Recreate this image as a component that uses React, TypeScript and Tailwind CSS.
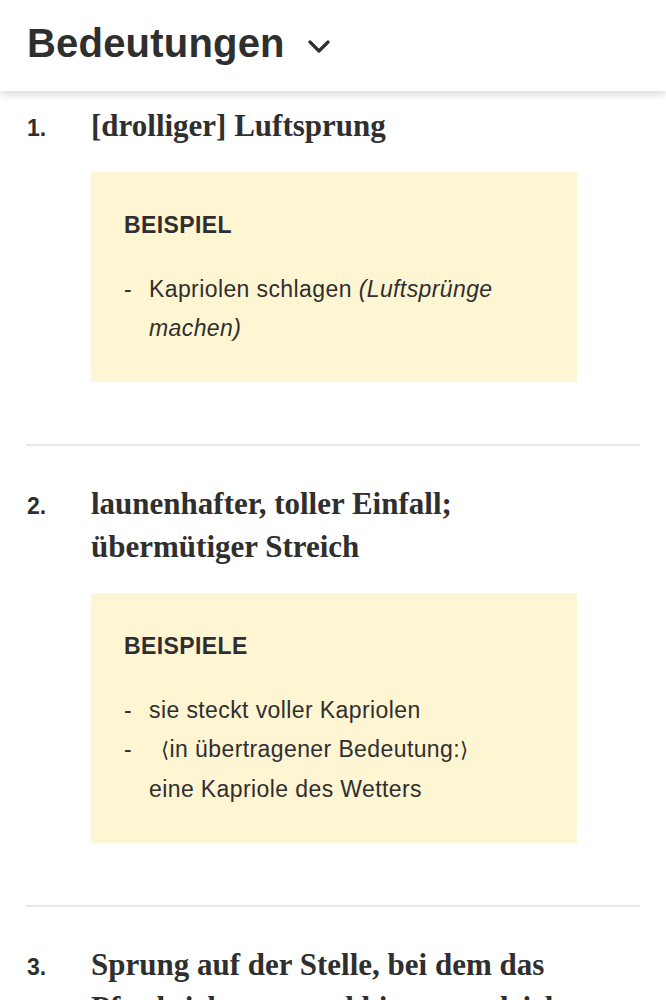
import React from 'react';

type Example = { text: React.ReactNode };

type Meaning = {
  id: number;
  title: string;
  label?: string;
  examples?: Example[];
};

const MEANINGS: Meaning[] = [
  {
    id: 1,
    title: '[drolliger] Luftsprung',
    label: 'BEISPIEL',
    examples: [
      {
        text: (
          <>
            Kapriolen schlagen <em className="italic">(Luftsprünge machen)</em>
          </>
        ),
      },
    ],
  },
  {
    id: 2,
    title: 'launenhafter, toller Einfall; übermütiger Streich',
    label: 'BEISPIELE',
    examples: [
      { text: 'sie steckt voller Kapriolen' },
      {
        text: (
          <>
            <span className="pl-[12px] font-['DejaVu_Sans',sans-serif] text-[21px]">⟨</span>in übertragener Bedeutung:
            <span className="font-['DejaVu_Sans',sans-serif] text-[21px]">⟩</span>
            <br />
            eine Kapriole des Wetters
          </>
        ),
      },
    ],
  },
  {
    id: 3,
    title: 'Sprung auf der Stelle, bei dem das Pferd sich vorn und hinten zugleich in die Luft erhebt',
  },
];

export default function App() {
  return (
    <main className="w-full min-h-screen bg-white text-[#2f2f2f] font-['Liberation_Sans',Arial,sans-serif]">
      {/* Sticky header */}
      <header className="sticky top-0 z-10 h-[91px] bg-white px-[27px] flex items-center gap-[23px] shadow-[0_3px_9px_rgba(0,0,0,0.16)]">
        <h2 className="text-[40px] font-bold leading-none tracking-[0.2px] pb-[6px]">Bedeutungen</h2>
        <svg width="22" height="14" viewBox="0 0 22 14" className="mt-[2px]">
          <polyline points="2,2 11,11 20,2" fill="none" stroke="#2f2f2f" strokeWidth="3.2" strokeLinecap="round" strokeLinejoin="round" />
        </svg>
      </header>

      <div className="px-[26px] pt-[13px]">
        {MEANINGS.map((m, i) => (
          <React.Fragment key={m.id}>
            {i > 0 && <div className="h-[2px] bg-[#e8e8e8] mt-[62px] mb-[36px]" />}
            <MeaningItem meaning={m} />
          </React.Fragment>
        ))}
      </div>
    </main>
  );
}

function MeaningItem({ meaning }: { meaning: Meaning }) {
  return (
    <div className="flex items-baseline">
      <span className="w-[65px] shrink-0 pl-[1px] text-[23px] font-bold leading-[43px]">{meaning.id}.</span>
      <div className="w-[486px]">
        <h3 className="font-['Liberation_Serif','Times_New_Roman',serif] text-[31px] font-bold leading-[43px]">
          {meaning.title}
        </h3>
        {meaning.examples && (
          <div className="mt-[25px] bg-[#fef5d3] pl-[33px] pr-[30px] pt-[39px] pb-[34px]">
            <div className="text-[23px] font-bold leading-[28px] tracking-[0.4px]">{meaning.label}</div>
            <ul className="mt-[31px]">
              {meaning.examples.map((ex, idx) => (
                <li key={idx} className="flex text-[23px] leading-[39px] tracking-[0.4px]">
                  <span className="w-[25px] shrink-0">-</span>
                  <span>{ex.text}</span>
                </li>
              ))}
            </ul>
          </div>
        )}
      </div>
    </div>
  );
}
